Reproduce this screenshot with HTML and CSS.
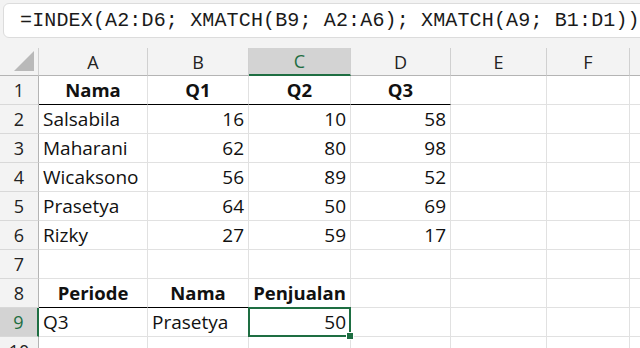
FILE: index.html
```html
<!DOCTYPE html>
<html lang="id">
<head>
    <meta charset="UTF-8">
    <title>INDEX XMATCH</title>
    <link rel="stylesheet" href="styles.css">
</head>
<body>
    <!-- Formula bar -->
    <div class="formula-bar">
        <div class="formula">=INDEX(A2:D6; XMATCH(B9; A2:A6); XMATCH(A9; B1:D1))</div>
    </div>

    <!-- Sheet grid -->
    <div class="sheet">
        <div class="hd corner"><span class="tri"></span></div>
        <div class="hd">A</div>
        <div class="hd">B</div>
        <div class="hd col-sel">C</div>
        <div class="hd">D</div>
        <div class="hd">E</div>
        <div class="hd">F</div>
        <div class="hd"></div>

        <div class="rh">1</div>
        <div class="c b ctr ul">Nama</div>
        <div class="c b ctr ul">Q1</div>
        <div class="c b ctr ul">Q2</div>
        <div class="c b ctr ul">Q3</div>
        <div class="c"></div><div class="c"></div><div class="c"></div>

        <div class="rh">2</div>
        <div class="c">Salsabila</div>
        <div class="c n">16</div>
        <div class="c n">10</div>
        <div class="c n">58</div>
        <div class="c"></div><div class="c"></div><div class="c"></div>

        <div class="rh">3</div>
        <div class="c">Maharani</div>
        <div class="c n">62</div>
        <div class="c n">80</div>
        <div class="c n">98</div>
        <div class="c"></div><div class="c"></div><div class="c"></div>

        <div class="rh">4</div>
        <div class="c">Wicaksono</div>
        <div class="c n">56</div>
        <div class="c n">89</div>
        <div class="c n">52</div>
        <div class="c"></div><div class="c"></div><div class="c"></div>

        <div class="rh">5</div>
        <div class="c">Prasetya</div>
        <div class="c n">64</div>
        <div class="c n">50</div>
        <div class="c n">69</div>
        <div class="c"></div><div class="c"></div><div class="c"></div>

        <div class="rh">6</div>
        <div class="c">Rizky</div>
        <div class="c n">27</div>
        <div class="c n">59</div>
        <div class="c n">17</div>
        <div class="c"></div><div class="c"></div><div class="c"></div>

        <div class="rh">7</div>
        <div class="c"></div><div class="c"></div><div class="c"></div><div class="c"></div>
        <div class="c"></div><div class="c"></div><div class="c"></div>

        <div class="rh">8</div>
        <div class="c b ctr ul">Periode</div>
        <div class="c b ctr ul">Nama</div>
        <div class="c b ctr ul">Penjualan</div>
        <div class="c"></div><div class="c"></div><div class="c"></div><div class="c"></div>

        <div class="rh row-sel">9</div>
        <div class="c">Q3</div>
        <div class="c">Prasetya</div>
        <div class="c n active">50</div>
        <div class="c"></div><div class="c"></div><div class="c"></div><div class="c"></div>

        <div class="rh">10</div>
        <div class="c"></div><div class="c"></div><div class="c"></div><div class="c"></div>
        <div class="c"></div><div class="c"></div><div class="c"></div>
    </div>
</body>
</html>
```

FILE: styles.css
```css
body {
    margin: 0;
    height: 348px;
    overflow: hidden;
    background-color: #f3f3f3;
    font-family: "Open Sans", Arial, sans-serif;
    color: #111;
}

/* formula bar */
.formula-bar {
    padding: 3px 0 10px 3px;
}

.formula {
    height: 33px;
    margin-right: -20px;
    background: white;
    border: 1px solid #dcdcdc;
    border-radius: 6px;
    padding-left: 16px;
    font-family: "Liberation Mono", monospace;
    font-size: 20px;
    letter-spacing: 0.15px;
    line-height: 33px;
    color: #1a1a1a;
    white-space: nowrap;
}

/* grid */
.sheet {
    display: grid;
    grid-template-columns: 39px 109px 101px 102px 100px 96px 83px 40px;
    grid-template-rows: 28px repeat(10, 29px);
    background: white;
}

.hd {
    background: #f3f3f3;
    border-right: 1px solid #d0d0d0;
    border-bottom: 1px solid #b4b4b4;
    text-align: center;
    font-size: 18px;
    line-height: 28px;
    color: #222;
}

.corner {
    position: relative;
}

.corner .tri {
    position: absolute;
    right: 4px;
    bottom: 4px;
    width: 0;
    height: 0;
    border-left: 20px solid transparent;
    border-bottom: 20px solid #b9b9b9;
}

.col-sel {
    background: #d3d3d3;
    color: #1e6e42;
    border-bottom: 2px solid #1e6e42;
    line-height: 27px;
}

.rh {
    background: #f3f3f3;
    border-right: 1px solid #b4b4b4;
    border-bottom: 1px solid #d8d8d8;
    text-align: center;
    font-size: 18px;
    line-height: 28px;
    color: #222;
}

.row-sel {
    background: #d3d3d3;
    color: #1e6e42;
    border-right: 2px solid #1e6e42;
}

.c {
    border-right: 1px solid #e1e1e1;
    border-bottom: 1px solid #e1e1e1;
    padding: 0 4px;
    font-size: 19px;
    line-height: 28px;
    white-space: nowrap;
    overflow: hidden;
}

.b {
    font-weight: bold;
    font-size: 18.5px;
}

.ctr {
    text-align: center;
}

.n {
    text-align: right;
}

.ul {
    border-bottom: 1px solid #000;
}

/* selected cell */
.active {
    position: relative;
    overflow: visible;
}

.active::after {
    content: "";
    position: absolute;
    left: -1px;
    top: -1px;
    right: -1px;
    bottom: -1px;
    border: 2px solid #1e6e42;
}

.active::before {
    content: "";
    position: absolute;
    right: -4px;
    bottom: -4px;
    width: 6px;
    height: 6px;
    background: #1e6e42;
    border: 1px solid white;
    z-index: 1;
}
```
